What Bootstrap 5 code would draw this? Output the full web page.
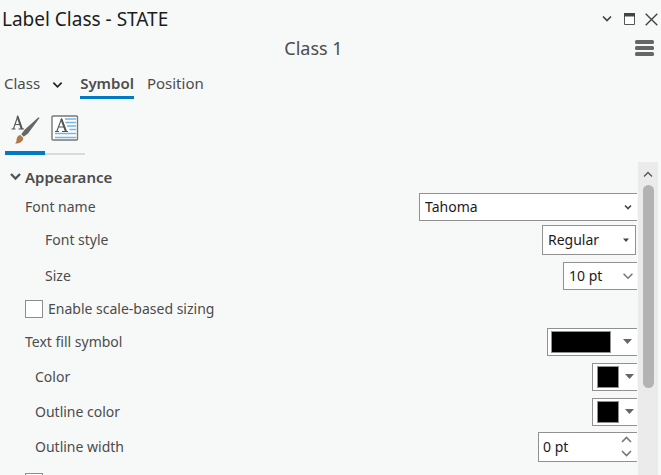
<!DOCTYPE html>
<html lang="en">
<head>
<meta charset="utf-8">
<meta name="viewport" content="width=device-width, initial-scale=1">
<title>Label Class - STATE</title>
<link href="https://cdn.jsdelivr.net/npm/bootstrap@5.3.0/dist/css/bootstrap.min.css" rel="stylesheet">
<style>
  body { background: #f7f9f8; color: #4c4c4c; font: 14px/20px "Noto Sans", "Open Sans", sans-serif; }
  button { color: inherit; }
  svg { display: block; }
  .pane-title { font-size: 19px; line-height: 38px; color: #1c1c1c; padding-left: 2px; }
  .window-tools { gap: 10px; padding-right: 3px; }
  .subhead { font-size: 18px; line-height: 20px; padding-right: 7px; }
  .subhead span { padding-right: 8px; }
  .tabs { padding: 15px 4px 0; gap: 13px; font-size: 15px; line-height: 20px; }
  .tabs button { padding: 0 0 3px; border-bottom: 3px solid transparent; }
  .tabs .current { font-weight: 600; border-color: #007ac2; }
  .icon-tabs { padding: 12px 5px 0; }
  .icon-tabs button { width: 40px; height: 44px; padding-top: 3px; border-bottom: 2px solid #dadada; }
  .icon-tabs .current { border-bottom: 4px solid #007ac2; }
  .icon-tabs svg { margin: 0 auto; }
  .scroll-area { margin-top: 7px; min-height: 0; }
  .form-pane { min-height: 0; padding-left: 25px; padding-right: 1px; }
  .section-head { height: 30px; font-size: 15px; font-weight: 600; margin-left: -15px; }
  .prop { flex: none; height: 35px; }
  .prop-short { height: 30px; }
  .prop-tall { height: 36px; }
  .indent-1 { padding-left: 10px; }
  .indent-2 { padding-left: 20px; }
  .field { height: 28px; background-color: #fff; border: 1px solid #919191; border-right: 0; border-radius: 0; color: #1c1c1c; font-size: 14px; line-height: 20px; }
  .form-select.field { padding: 0 20px 0 5px; background-position: right 4px center; background-size: 10px 10px; width: auto; }
  .form-select.chevron { background-image: url("data:image/svg+xml,%3Csvg xmlns='http://www.w3.org/2000/svg' viewBox='0 0 10 10'%3E%3Cpath d='M2 3.5l3 3 3-3' fill='none' stroke='%23444' stroke-width='1.6'/%3E%3C/svg%3E"); }
  .form-select.thin { background-image: url("data:image/svg+xml,%3Csvg xmlns='http://www.w3.org/2000/svg' viewBox='0 0 10 10'%3E%3Cpath d='M.6 2.8L5 7.2l4.400-4.400' fill='none' stroke='%23777' stroke-width='1.600'/%3E%3C/svg%3E"); }
  .form-select.triangle { background-image: url("data:image/svg+xml,%3Csvg xmlns='http://www.w3.org/2000/svg' viewBox='0 0 10 10'%3E%3Cpath d='M2 3.500h6l-3 3.500z' fill='%23444'/%3E%3C/svg%3E"); }
  .form-select.w-name { width: 218px; }
  .form-select.w-style { width: 94px; height: 30px; border-right: 1px solid #919191; margin-right: 1px; }
  .form-select.w-size { width: 74px; }
  .w-spin { width: 99px; height: 30px; }
  .w-spin input { width: 60px; padding: 0 0 0 4px; color: inherit; }
  .spin-keys { width: 22px; }
  .swatch-field { padding: 0 3px 0 4px; gap: 6px; }
  .swatch-wide { padding: 0 5px 0 3px; gap: 12px; }
  .swatch-fill { width: 22px; height: 22px; background: #000; border: 1px solid #919191; }
  .swatch-wide .swatch-fill { width: 60px; }
  .form-check-input.tick { width: 18px; height: 18px; margin: 0 5px 0 0; border: 1px solid #8c8c8c; border-radius: 0; background-color: #fff; }
  .scroll-track { width: 20px; background: #ebebeb; margin-right: 3px; }
  .scroll-track button { height: 23px; }
  .scroll-thumb { width: 11px; height: 65%; border-radius: 6px; background: #b3b3b3; }
</style>
<script src="https://cdn.jsdelivr.net/npm/bootstrap@5.3.0/dist/js/bootstrap.bundle.min.js"></script>
</head>
<body>
<main class="vh-100 d-flex flex-column overflow-hidden">
  <header>
    <div class="d-flex align-items-center justify-content-between">
      <h1 class="pane-title m-0 fw-normal">Label Class - STATE</h1>
      <div class="window-tools d-flex align-items-center">
        <button class="border-0 bg-transparent p-0" aria-label="Pane options"><svg width="12" height="14" viewBox="0 0 12 14"><path d="M2 4.500l4 4 4-4" fill="none" stroke="#444" stroke-width="1.700"/></svg></button>
        <button class="border-0 bg-transparent p-0" aria-label="Maximize"><svg width="12" height="12" viewBox="0 0 12 12"><path d="M1.500.5h10v11h-10z" fill="#fff" stroke="#555"/><path d="M1 0h11v3.500H1z" fill="#444"/></svg></button>
        <button class="border-0 bg-transparent p-0" aria-label="Close"><svg width="13" height="13" viewBox="0 0 13 13"><path d="M.7.7l11.600 11.600M12.300.7L.7 12.300" stroke="#444" stroke-width="1.400"/></svg></button>
      </div>
    </div>
    <div class="subhead d-flex align-items-center">
      <span class="flex-fill text-center">Class 1</span>
      <button class="border-0 bg-transparent p-0" aria-label="Menu"><svg width="19" height="16" viewBox="0 0 19 16" fill="#666"><rect width="19" height="4" rx="1.500"/><rect y="6" width="19" height="4" rx="1.500"/><rect y="12" width="19" height="4" rx="1.500"/></svg></button>
    </div>
    <nav class="tabs d-flex">
      <button class="bg-transparent border-top-0 border-start-0 border-end-0 d-flex align-items-center gap-2">Class <svg class="mt-1 mx-1" width="11" height="10" viewBox="0 0 12 10"><path d="M1.500 2.500L6 7l4.500-4.500" fill="none" stroke="#222" stroke-width="1.900"/></svg></button>
      <button class="current bg-transparent border-top-0 border-start-0 border-end-0">Symbol</button>
      <button class="bg-transparent border-top-0 border-start-0 border-end-0">Position</button>
    </nav>
    <nav class="icon-tabs d-flex align-items-end">
      <button class="current bg-transparent border-top-0 border-start-0 border-end-0 px-0 pb-0 d-flex align-items-start" aria-label="General"><svg width="30" height="30" viewBox="0 0 30 30"><path d="M1.500 15h4M8.500 15H14M3.500 14.800L7.700 2.500 12 14.800M5 10.500h5" fill="none" stroke="#555" stroke-width="1.100"/><path d="M7.500 2.500L11.800 15" stroke="#555" stroke-width="2"/><path d="M29.500 4L18 19.500l-4.300 3.200-2.400-2.400 3.300-4.600L28.500 3.200z" fill="#666"/><path d="M10.300 21l3 3c0 3.500-3.300 5.500-8.300 5.500 2-1.500 1.300-3.800 2-5.800.6-1.500 1.800-2.400 3.300-2.700z" fill="#af7a45"/></svg></button>
      <button class="bg-transparent border-top-0 border-start-0 border-end-0 px-0 pb-0 d-flex align-items-start" aria-label="Formatting"><svg width="28" height="28" viewBox="0 0 28 28"><rect x="1" y="2" width="25.500" height="24" rx="1" fill="#fff" stroke="#777" stroke-width="1.400"/><path d="M14 5h11M14.500 8.500H25M16 12h9M18.500 15.500H25M4 19.500h21M4 23.500h21" stroke="#73b5e4" stroke-width="1.300"/><path d="M4 17.500h4M11 17.500h6M5.800 17.300L10.500 5 15 17.300M7.500 13h6" fill="none" stroke="#555" stroke-width="1.100"/><path d="M10.300 5L15 17.500" stroke="#555" stroke-width="2.100"/></svg></button>
    </nav>
  </header>

  <div class="scroll-area d-flex flex-fill">
    <form class="form-pane d-flex flex-column flex-fill overflow-hidden">
      <h2 class="section-head prop mb-0 d-flex align-items-center prop-short">
        <button type="button" class="border-0 bg-transparent p-0 fw-semibold d-flex align-items-center gap-1"><svg width="11" height="10" viewBox="0 0 11 10"><path d="M1 2l4.500 4.500L10 2" fill="none" stroke="#555" stroke-width="2.400"/></svg>Appearance</button>
      </h2>
      <div class="prop prop-short d-flex align-items-center justify-content-between">
        <label for="fname">Font name</label>
        <select id="fname" class="form-select field chevron w-name"><option>Tahoma</option></select>
      </div>
      <div class="prop prop-tall indent-2 d-flex align-items-center justify-content-between">
        <label for="fstyle">Font style</label>
        <select id="fstyle" class="form-select field triangle w-style"><option>Regular</option></select>
      </div>
      <div class="prop prop-tall indent-2 d-flex align-items-center justify-content-between">
        <label for="fsize">Size</label>
        <select id="fsize" class="form-select field thin w-size"><option>10 pt</option></select>
      </div>
      <div class="prop prop-short d-flex align-items-center">
        <input id="scaled" type="checkbox" class="form-check-input tick">
        <label for="scaled">Enable scale-based sizing</label>
      </div>
      <div class="prop d-flex align-items-center justify-content-between">
        <label for="fill">Text fill symbol</label>
        <button id="fill" type="button" class="field swatch-field swatch-wide d-flex align-items-center"><span class="swatch-fill"></span><svg width="9" height="5" viewBox="0 0 9 5"><path d="M0 0h9L4.500 5z" fill="#666"/></svg></button>
      </div>
      <div class="prop indent-1 d-flex align-items-center justify-content-between">
        <label for="color">Color</label>
        <button id="color" type="button" class="field swatch-field d-flex align-items-center"><span class="swatch-fill"></span><svg width="9" height="5" viewBox="0 0 9 5"><path d="M0 0h9L4.500 5z" fill="#666"/></svg></button>
      </div>
      <div class="prop indent-1 d-flex align-items-center justify-content-between">
        <label for="ocolor">Outline color</label>
        <button id="ocolor" type="button" class="field swatch-field d-flex align-items-center"><span class="swatch-fill"></span><svg width="9" height="5" viewBox="0 0 9 5"><path d="M0 0h9L4.500 5z" fill="#666"/></svg></button>
      </div>
      <div class="prop indent-1 d-flex align-items-center justify-content-between">
        <label for="owidth">Outline width</label>
        <div class="field w-spin d-flex justify-content-between">
          <input id="owidth" type="text" class="border-0 bg-transparent" value="0 pt">
          <div class="spin-keys d-flex flex-column">
            <button type="button" class="border-0 bg-transparent p-0 flex-fill d-flex align-items-center justify-content-center" aria-label="Increase"><svg width="11" height="7" viewBox="0 0 11 7"><path d="M1 6l4.500-4.500L10 6" fill="none" stroke="#777" stroke-width="1.600"/></svg></button>
            <button type="button" class="border-0 bg-transparent p-0 flex-fill d-flex align-items-center justify-content-center" aria-label="Decrease"><svg width="11" height="7" viewBox="0 0 11 7"><path d="M1 1l4.500 4.500L10 1" fill="none" stroke="#777" stroke-width="1.600"/></svg></button>
          </div>
        </div>
      </div>
      <div class="prop d-flex align-items-center">
        <input type="checkbox" class="form-check-input tick" aria-label="Next option">
      </div>
    </form>
    <div class="scroll-track d-flex flex-column align-items-center">
      <button type="button" class="border-0 bg-transparent p-0" aria-label="Scroll up"><svg width="10" height="6" viewBox="0 0 10 6"><path d="M1 5.500l4-4 4 4" fill="none" stroke="#555" stroke-width="1.400"/></svg></button>
      <div class="scroll-thumb"></div>
    </div>
  </div>
</main>
</body>
</html>
